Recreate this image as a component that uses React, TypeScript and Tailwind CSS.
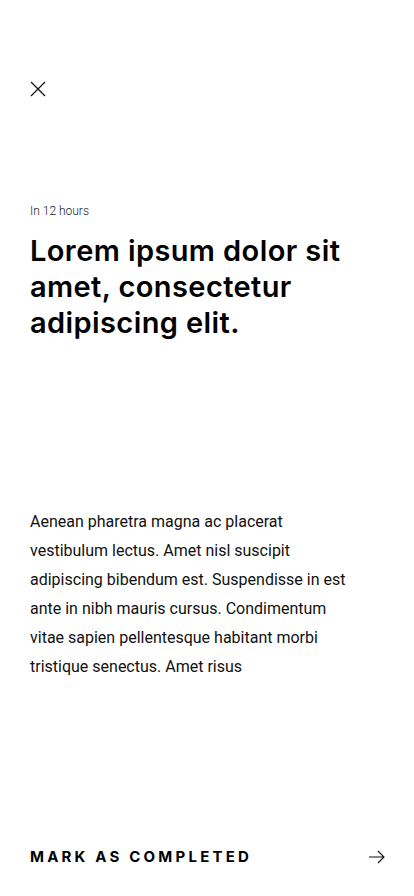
import React from "react";

export default function App() {
  return (
    <div className="w-[414px] h-[896px] bg-white flex flex-col px-[30px] text-black" style={{ fontFamily: "Roboto, 'Liberation Sans', sans-serif" }}>
      <div className="pt-[81px] h-[97px]">
        <svg width="16" height="16" viewBox="0 0 16 16" fill="none" stroke="#111" strokeWidth="1.3">
          <path d="M1 1 L15 15 M15 1 L1 15" />
        </svg>
      </div>
      <div className="mt-[106px] text-[12px] leading-[16px] font-light text-[#222]">In 12 hours</div>
      <h1 className="mt-[14px] text-[29px] leading-[36px] font-semibold tracking-[0.4px] pr-[10px]" style={{ fontFamily: "Inter, 'Noto Sans', sans-serif" }}>
        Lorem ipsum dolor sit amet, consectetur adipiscing elit.
      </h1>
      <p className="mt-[166px] w-[322px] text-[16px] leading-[29px] text-[#111]">
        Aenean pharetra magna ac placerat vestibulum lectus. Amet nisl suscipit adipiscing bibendum est. Suspendisse in est ante in nibh mauris cursus. Condimentum vitae sapien pellentesque habitant morbi tristique senectus. Amet risus
      </p>
      <div className="mt-auto mb-[29px] flex items-center justify-between">
        <span className="text-[15px] font-bold tracking-[3.2px] leading-[20px]" style={{ fontFamily: "Inter, Roboto, sans-serif" }}>MARK AS COMPLETED</span>
        <svg width="18" height="14" viewBox="0 0 18 14" fill="none" stroke="#111" strokeWidth="1.1" className="mr-[-2px]">
          <path d="M1 7 H16 M10 1 L16 7 L10 13" />
        </svg>
      </div>
    </div>
  );
}
